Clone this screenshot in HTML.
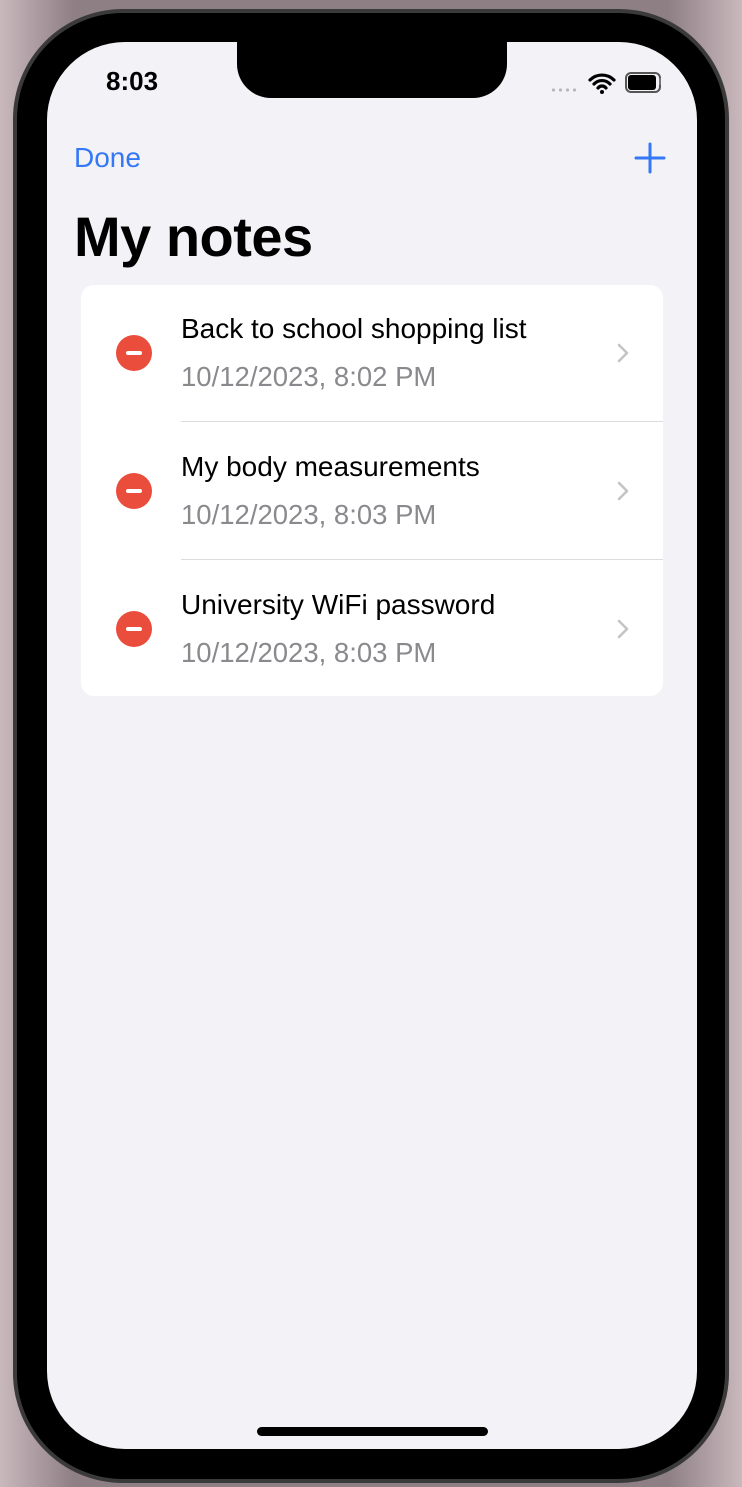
<!DOCTYPE html>
<html><head><meta charset="utf-8"><style>
html,body{margin:0;padding:0;width:742px;height:1487px;overflow:hidden;background:linear-gradient(90deg,#c9b9bd,#8e7f85 10%,#8e7f85 90%,#c9b9bd);font-family:"Liberation Sans",sans-serif;}
.phone{position:absolute;left:13px;top:9px;width:716px;height:1474px;border-radius:110px;background:#3a3a3a;}
.bezel{position:absolute;left:17px;top:13px;width:708px;height:1466px;border-radius:106px;background:#000;}
.screen{position:absolute;left:47px;top:42px;width:650px;height:1407px;border-radius:78px;background:#f2f2f7;overflow:hidden;}
.notch{position:absolute;left:190px;top:-2px;width:270px;height:58px;background:#000;border-radius:0 0 34px 34px;}
.abs{position:absolute;}
.card{position:absolute;left:34px;top:243px;width:582px;height:411px;background:#fff;border-radius:13px;}
.row{position:absolute;left:0;width:582px;height:138px;}
.minus{position:absolute;left:35px;width:36px;height:36px;border-radius:50%;background:#eb4d3d;}
.minus:after{content:"";position:absolute;left:10px;top:16px;width:16px;height:4px;background:#fff;border-radius:2px;}
.t{position:absolute;left:100px;font-size:28px;color:#000;white-space:nowrap;}
.d{position:absolute;left:100px;font-size:27.5px;color:#8a8a8e;white-space:nowrap;}
.sep{position:absolute;left:100px;right:0;height:1px;background:#dcdce0;}
.chev{position:absolute;left:535px;}
</style></head><body>
<div class="phone"></div>
<div class="bezel"></div>
<div class="screen">
<div class="notch"></div>
<div class="abs" style="left:59px;top:24px;font-size:26px;font-weight:bold;color:#000;">8:03</div>
<div class="abs" style="left:503px;top:46px;width:28px;height:4px;background-image:radial-gradient(circle,#b8b8bc 1.6px,transparent 1.8px);background-size:7px 4px;"></div>
<svg class="abs" style="left:541px;top:30px" width="28" height="22" viewBox="0 0 28 22"><path d="M2 8a17 17 0 0 1 24 0M6 12a11 11 0 0 1 16 0M10 16a5 5 0 0 1 8 0" stroke="#000" stroke-width="3.2" fill="none" stroke-linecap="round"/><circle cx="14" cy="20" r="2" fill="#000"/></svg>
<div class="abs" style="left:578px;top:30px;width:32px;height:17px;border:2px solid #555;border-radius:6px;"></div>
<div class="abs" style="left:581px;top:33px;width:28px;height:15px;background:#000;border-radius:3px;"></div>
<div class="abs" style="left:612px;top:36px;width:2px;height:7px;background:#777;border-radius:1px;"></div>
<div class="abs" style="left:27px;top:100px;font-size:28px;color:#3478f6;">Done</div>
<svg class="abs" style="left:587px;top:100px" width="32" height="32"><path d="M16 2v28M2 16h28" stroke="#3478f6" stroke-width="3" stroke-linecap="round"/></svg>
<div class="abs" style="left:27px;top:162px;font-size:56px;font-weight:bold;color:#000;letter-spacing:-0.5px;">My notes</div>
<div class="card">
 <div class="row" style="top:0"><div class="minus" style="top:50px"></div><div class="t" style="top:28px">Back to school shopping list</div><div class="d" style="top:76px">10/12/2023, 8:02 PM</div><svg class="chev" style="top:57px" width="14" height="22"><path d="M3 3l8 8-8 8" stroke="#c4c4c7" stroke-width="2.6" fill="none" stroke-linecap="round" stroke-linejoin="round"/></svg><div class="sep" style="top:136px"></div></div>
 <div class="row" style="top:138px"><div class="minus" style="top:50px"></div><div class="t" style="top:28px">My body measurements</div><div class="d" style="top:76px">10/12/2023, 8:03 PM</div><svg class="chev" style="top:57px" width="14" height="22"><path d="M3 3l8 8-8 8" stroke="#c4c4c7" stroke-width="2.6" fill="none" stroke-linecap="round" stroke-linejoin="round"/></svg><div class="sep" style="top:136px"></div></div>
 <div class="row" style="top:276px"><div class="minus" style="top:50px"></div><div class="t" style="top:28px">University WiFi password</div><div class="d" style="top:76px">10/12/2023, 8:03 PM</div><svg class="chev" style="top:57px" width="14" height="22"><path d="M3 3l8 8-8 8" stroke="#c4c4c7" stroke-width="2.6" fill="none" stroke-linecap="round" stroke-linejoin="round"/></svg></div>
</div>
<div class="abs" style="left:210px;top:1385px;width:231px;height:9px;background:#000;border-radius:5px;"></div>
</div>
</body></html>
